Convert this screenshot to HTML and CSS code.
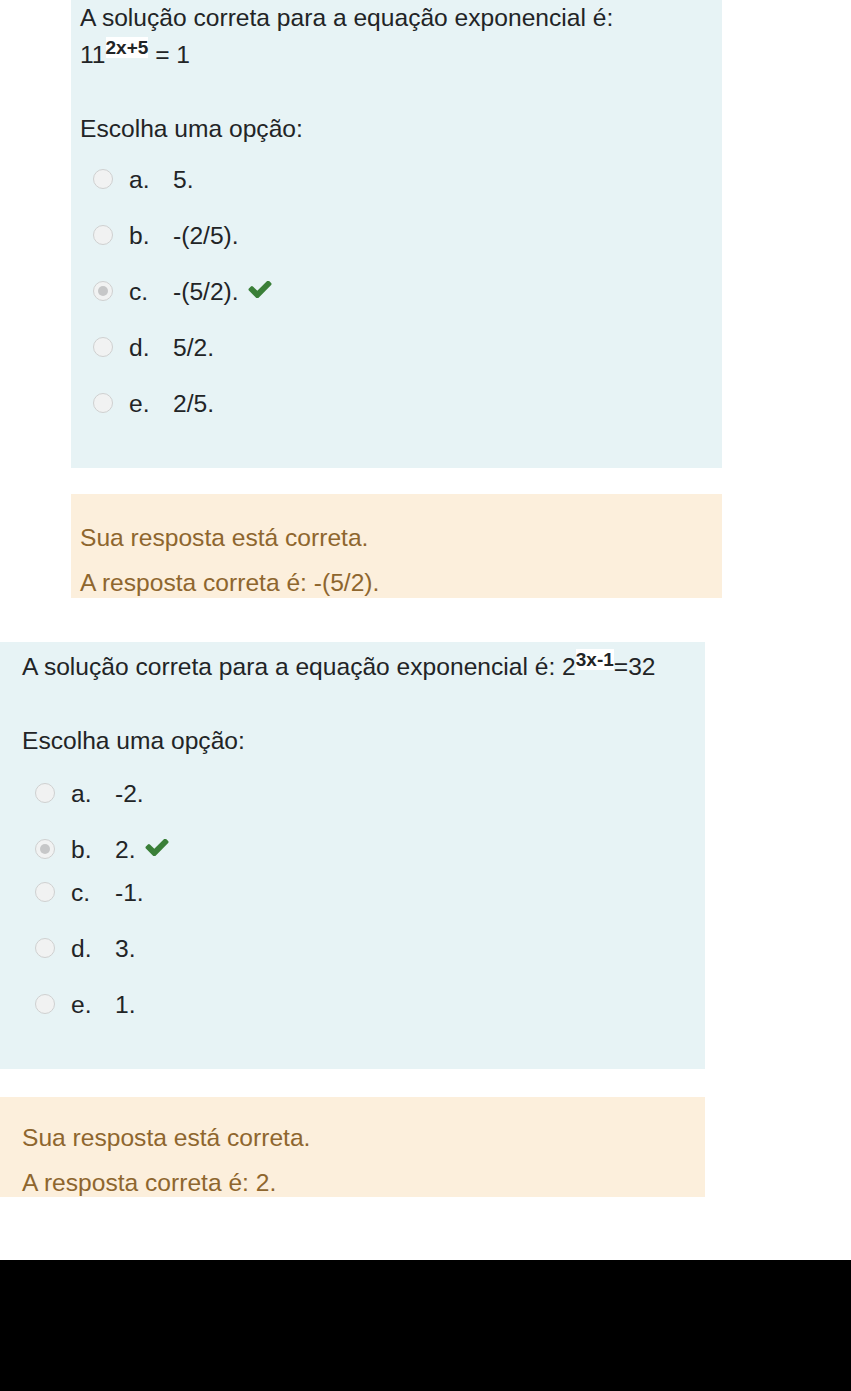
FILE: index.html
```html
<!DOCTYPE html>
<html lang="pt">
<head>
<meta charset="utf-8">
<title>Questões</title>
<link rel="stylesheet" href="styles.css">
</head>
<body>
<main class="page">
  <section class="que q1">
    <div class="formulation">
      <div class="qtext">
        <div>A solução correta para a equação exponencial é:</div>
        <div>11<sup class="exp">2x+5</sup> = 1</div>
      </div>
      <div class="prompt">Escolha uma opção:</div>
      <div class="answer">
        <div class="opt"><span class="radio"></span><span class="letter">a.</span><span class="val">5.</span></div>
        <div class="opt"><span class="radio"></span><span class="letter">b.</span><span class="val">-(2/5).</span></div>
        <div class="opt"><span class="radio checked"></span><span class="letter">c.</span><span class="val">-(5/2).</span><svg class="check" viewBox="110 360 1570 1140"><path d="M1671 566q0 40-28 68l-724 724-136 136q-28 28-68 28t-68-28l-136-136-362-362q-28-28-28-68t28-68l136-136q28-28 68-28t68 28l294 295 656-657q28-28 68-28t68 28l136 136q28 28 28 68z"/></svg></div>
        <div class="opt"><span class="radio"></span><span class="letter">d.</span><span class="val">5/2.</span></div>
        <div class="opt"><span class="radio"></span><span class="letter">e.</span><span class="val">2/5.</span></div>
      </div>
    </div>
    <div class="feedback">
      <div class="fb-line">Sua resposta está correta.</div>
      <div class="fb-line">A resposta correta é: -(5/2).</div>
    </div>
  </section>

  <section class="que q2">
    <div class="formulation">
      <div class="qtext">
        <div>A solução correta para a equação exponencial é: 2<sup class="exp">3x-1</sup>=32</div>
      </div>
      <div class="prompt">Escolha uma opção:</div>
      <div class="answer">
        <div class="opt"><span class="radio"></span><span class="letter">a.</span><span class="val">-2.</span></div>
        <div class="opt tight"><span class="radio checked"></span><span class="letter">b.</span><span class="val">2.</span><svg class="check" viewBox="110 360 1570 1140"><path d="M1671 566q0 40-28 68l-724 724-136 136q-28 28-68 28t-68-28l-136-136-362-362q-28-28-28-68t28-68l136-136q28-28 68-28t68 28l294 295 656-657q28-28 68-28t68 28l136 136q28 28 28 68z"/></svg></div>
        <div class="opt"><span class="radio"></span><span class="letter">c.</span><span class="val">-1.</span></div>
        <div class="opt"><span class="radio"></span><span class="letter">d.</span><span class="val">3.</span></div>
        <div class="opt"><span class="radio"></span><span class="letter">e.</span><span class="val">1.</span></div>
      </div>
    </div>
    <div class="feedback">
      <div class="fb-line">Sua resposta está correta.</div>
      <div class="fb-line">A resposta correta é: 2.</div>
    </div>
  </section>
</main>
<footer class="blackout"></footer>
</body>
</html>
```

FILE: styles.css
```css
html, body {
  margin: 0;
  padding: 0;
}

body {
  min-height: 100vh;
  display: flex;
  flex-direction: column;
  background: #ffffff;
  font-family: "Liberation Sans", Arial, sans-serif;
  font-size: 24.6px;
  line-height: 37px;
  color: #222426;
}

.page {
  display: flex;
  flex-direction: column;
}

.que {
  display: flex;
  flex-direction: column;
}

.q1 {
  margin-left: 71px;
  width: 651px;
  margin-top: -7px;
}

.q2 {
  width: 705px;
  margin-top: 44px;
}

.formulation {
  background: #e7f3f5;
  padding-top: 6px;
  padding-bottom: 37px;
}

.q1 .formulation,
.q1 .feedback {
  padding-left: 9px;
  padding-right: 9px;
}

.q2 .formulation,
.q2 .feedback {
  padding-left: 22px;
  padding-right: 22px;
}

.exp {
  font-size: 19px;
  font-weight: bold;
  background: #ffffff;
  line-height: 0;
}

.prompt {
  margin-top: 37px;
}

.answer {
  margin-top: 4px;
  display: flex;
  flex-direction: column;
}

.q2 .answer {
  margin-top: 6px;
}

.opt {
  height: 56px;
  display: flex;
  align-items: center;
  padding-left: 13px;
}

.opt.tight {
  margin-bottom: -13px;
}

.radio {
  width: 20px;
  height: 20px;
  box-sizing: border-box;
  border-radius: 50%;
  border: 1.5px solid #cfd0d0;
  background: #f1f2f2;
  display: flex;
  align-items: center;
  justify-content: center;
  margin-right: 16px;
  margin-top: -1px;
  flex-shrink: 0;
}

.radio.checked::after {
  content: "";
  width: 10px;
  height: 10px;
  border-radius: 50%;
  background: #c6c7c8;
}

.letter {
  width: 44px;
  flex-shrink: 0;
}

.check {
  width: 24px;
  height: 17px;
  margin-left: 9px;
  margin-top: -4px;
  fill: #3a7f38;
}

.feedback {
  margin-top: 26px;
  height: 104px;
  overflow: hidden;
  box-sizing: border-box;
  padding-top: 25px;
  background: #fcefdc;
  color: #8e662e;
}

.q2 .feedback {
  margin-top: 28px;
  height: 100px;
  padding-top: 22px;
}

.fb-line {
  margin-bottom: 8px;
}

.blackout {
  flex-grow: 1;
  margin-top: 63px;
  background: #000000;
}
```
